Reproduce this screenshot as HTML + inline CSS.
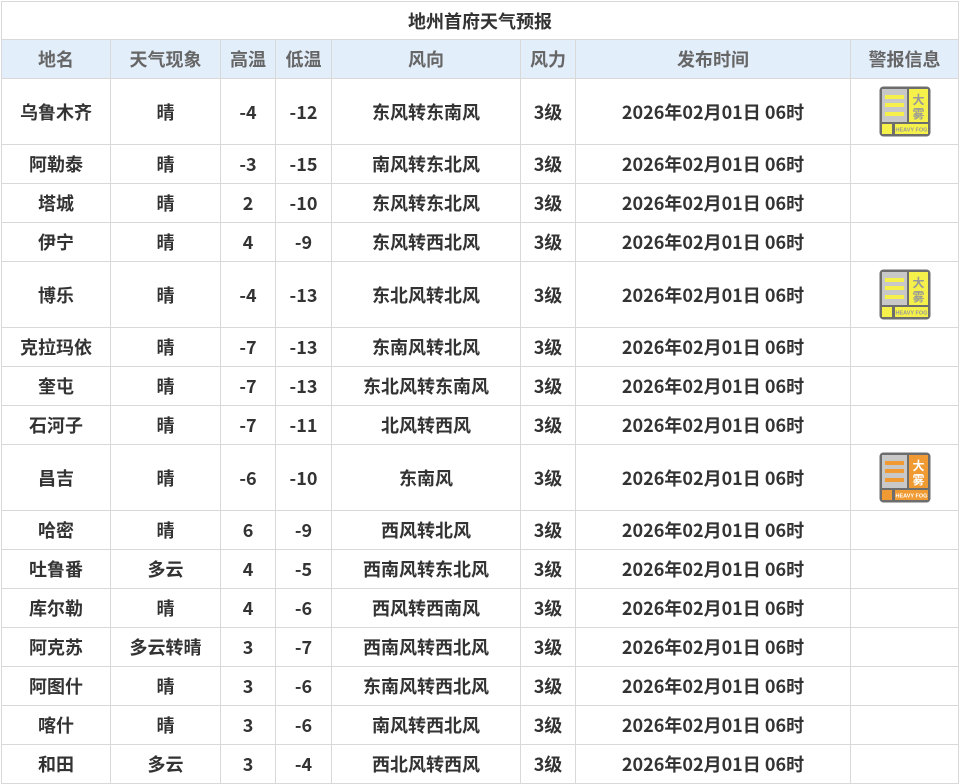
<!DOCTYPE html>
<html><head><meta charset="utf-8"><style>
body{margin:0;background:#fff;width:960px;height:780px;overflow:hidden}
table{position:absolute;left:1px;top:1px;border-collapse:collapse;table-layout:fixed;font-family:"Noto Sans CJK SC","Liberation Sans",sans-serif;font-weight:bold;font-size:18px;color:#333}
td,th{border:1px solid #d9d9d9;text-align:center;padding:0;height:38px;line-height:20px}
th{background:#e3eefb;color:#666;font-weight:bold}
tr.t td{height:65px}
td.title{height:37px;font-size:18px}
svg{display:block;margin:0 auto}
</style></head><body>
<table>
<colgroup><col style="width:109px"><col style="width:110px"><col style="width:55px"><col style="width:56px"><col style="width:189px"><col style="width:55px"><col style="width:275px"><col style="width:108px"></colgroup>
<tr><td colspan="8" class="title">地州首府天气预报</td></tr>
<tr><th>地名</th><th>天气现象</th><th>高温</th><th>低温</th><th>风向</th><th>风力</th><th>发布时间</th><th>警报信息</th></tr>
<tr class="t"><td>乌鲁木齐</td><td>晴</td><td>-4</td><td>-12</td><td>东风转东南风</td><td>3级</td><td>2026年02月01日 06时</td><td><svg width="52" height="51" viewBox="0 0 52 51"><rect x="0.5" y="0.5" width="51" height="50" rx="4" fill="#6d6d6d"/><rect x="3" y="3" width="25" height="33" fill="#c8c8c8"/><rect x="6" y="9" width="19" height="4" fill="#f5f04a"/><rect x="6" y="17" width="19" height="4" fill="#f5f04a"/><rect x="6" y="26" width="19" height="4" fill="#f5f04a"/><rect x="30" y="3" width="19" height="33" fill="#f5f04a"/><text x="39.5" y="18" font-size="12" text-anchor="middle" fill="#999" font-family="Noto Sans CJK SC">大</text><text x="39.5" y="32" font-size="12" text-anchor="middle" fill="#999" font-family="Noto Sans CJK SC">雾</text><rect x="3" y="38" width="10" height="10" fill="#f5f04a"/><rect x="16" y="38" width="33" height="10" fill="#f5f04a"/><text x="32.5" y="45.5" font-size="5.5" text-anchor="middle" fill="#999" font-family="Liberation Sans">HEAVY FOG</text></svg></td></tr>
<tr><td>阿勒泰</td><td>晴</td><td>-3</td><td>-15</td><td>南风转东北风</td><td>3级</td><td>2026年02月01日 06时</td><td></td></tr>
<tr><td>塔城</td><td>晴</td><td>2</td><td>-10</td><td>东风转东北风</td><td>3级</td><td>2026年02月01日 06时</td><td></td></tr>
<tr><td>伊宁</td><td>晴</td><td>4</td><td>-9</td><td>东风转西北风</td><td>3级</td><td>2026年02月01日 06时</td><td></td></tr>
<tr class="t"><td>博乐</td><td>晴</td><td>-4</td><td>-13</td><td>东北风转北风</td><td>3级</td><td>2026年02月01日 06时</td><td><svg width="52" height="51" viewBox="0 0 52 51"><rect x="0.5" y="0.5" width="51" height="50" rx="4" fill="#6d6d6d"/><rect x="3" y="3" width="25" height="33" fill="#c8c8c8"/><rect x="6" y="9" width="19" height="4" fill="#f5f04a"/><rect x="6" y="17" width="19" height="4" fill="#f5f04a"/><rect x="6" y="26" width="19" height="4" fill="#f5f04a"/><rect x="30" y="3" width="19" height="33" fill="#f5f04a"/><text x="39.5" y="18" font-size="12" text-anchor="middle" fill="#999" font-family="Noto Sans CJK SC">大</text><text x="39.5" y="32" font-size="12" text-anchor="middle" fill="#999" font-family="Noto Sans CJK SC">雾</text><rect x="3" y="38" width="10" height="10" fill="#f5f04a"/><rect x="16" y="38" width="33" height="10" fill="#f5f04a"/><text x="32.5" y="45.5" font-size="5.5" text-anchor="middle" fill="#999" font-family="Liberation Sans">HEAVY FOG</text></svg></td></tr>
<tr><td>克拉玛依</td><td>晴</td><td>-7</td><td>-13</td><td>东南风转北风</td><td>3级</td><td>2026年02月01日 06时</td><td></td></tr>
<tr><td>奎屯</td><td>晴</td><td>-7</td><td>-13</td><td>东北风转东南风</td><td>3级</td><td>2026年02月01日 06时</td><td></td></tr>
<tr><td>石河子</td><td>晴</td><td>-7</td><td>-11</td><td>北风转西风</td><td>3级</td><td>2026年02月01日 06时</td><td></td></tr>
<tr class="t"><td>昌吉</td><td>晴</td><td>-6</td><td>-10</td><td>东南风</td><td>3级</td><td>2026年02月01日 06时</td><td><svg width="52" height="51" viewBox="0 0 52 51"><rect x="0.5" y="0.5" width="51" height="50" rx="4" fill="#6d6d6d"/><rect x="3" y="3" width="25" height="33" fill="#c8c8c8"/><rect x="6" y="9" width="19" height="4" fill="#ef9a32"/><rect x="6" y="17" width="19" height="4" fill="#ef9a32"/><rect x="6" y="26" width="19" height="4" fill="#ef9a32"/><rect x="30" y="3" width="19" height="33" fill="#ef9a32"/><text x="39.5" y="18" font-size="12" text-anchor="middle" fill="#fff" font-family="Noto Sans CJK SC">大</text><text x="39.5" y="32" font-size="12" text-anchor="middle" fill="#fff" font-family="Noto Sans CJK SC">雾</text><rect x="3" y="38" width="10" height="10" fill="#ef9a32"/><rect x="16" y="38" width="33" height="10" fill="#ef9a32"/><text x="32.5" y="45.5" font-size="5.5" text-anchor="middle" fill="#fff" font-family="Liberation Sans">HEAVY FOG</text></svg></td></tr>
<tr><td>哈密</td><td>晴</td><td>6</td><td>-9</td><td>西风转北风</td><td>3级</td><td>2026年02月01日 06时</td><td></td></tr>
<tr><td>吐鲁番</td><td>多云</td><td>4</td><td>-5</td><td>西南风转东北风</td><td>3级</td><td>2026年02月01日 06时</td><td></td></tr>
<tr><td>库尔勒</td><td>晴</td><td>4</td><td>-6</td><td>西风转西南风</td><td>3级</td><td>2026年02月01日 06时</td><td></td></tr>
<tr><td>阿克苏</td><td>多云转晴</td><td>3</td><td>-7</td><td>西南风转西北风</td><td>3级</td><td>2026年02月01日 06时</td><td></td></tr>
<tr><td>阿图什</td><td>晴</td><td>3</td><td>-6</td><td>东南风转西北风</td><td>3级</td><td>2026年02月01日 06时</td><td></td></tr>
<tr><td>喀什</td><td>晴</td><td>3</td><td>-6</td><td>南风转西北风</td><td>3级</td><td>2026年02月01日 06时</td><td></td></tr>
<tr><td>和田</td><td>多云</td><td>3</td><td>-4</td><td>西北风转西风</td><td>3级</td><td>2026年02月01日 06时</td><td></td></tr>
</table>
</body></html>
